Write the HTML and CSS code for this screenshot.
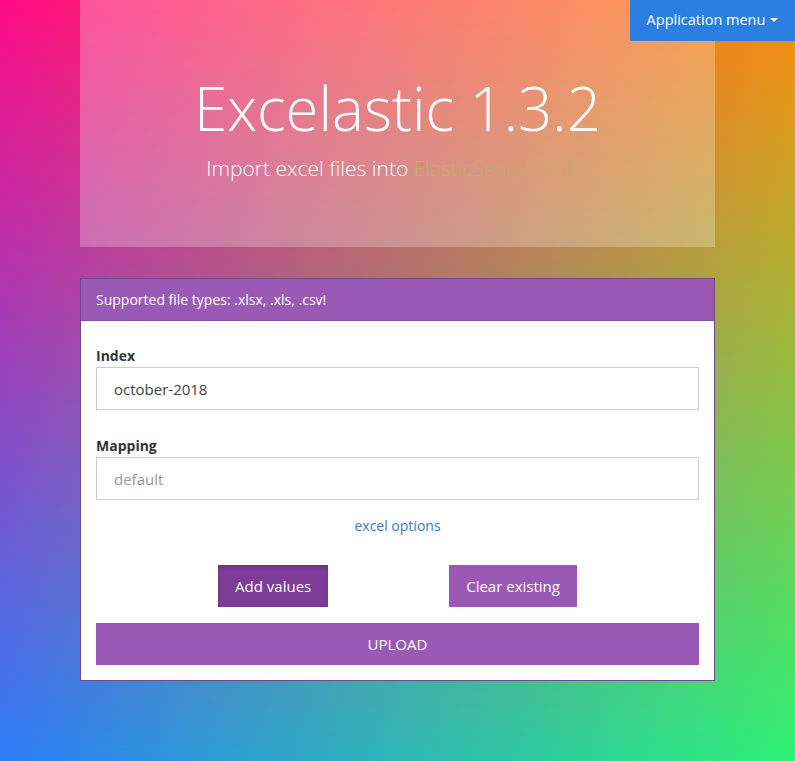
FILE: index.html
```html
<!DOCTYPE html>
<html>
<head>
<meta charset="utf-8">
<link rel="stylesheet" href="styles.css">
</head>
<body>
<div class="bg-top"></div>
<div class="app-menu">Application menu <span class="caret"></span></div>
<div class="container">
  <header class="jumbotron">
    <h1 class="title">Excelastic 1.3.2</h1>
    <p class="subtitle">Import excel files into <span class="es">ElasticSearch 6.4.2</span></p>
  </header>
  <section class="panel">
    <div class="panel-heading">Supported file types: .xlsx, .xls, .csv!</div>
    <div class="panel-body">
      <div class="form-group">
        <label class="label">Index</label>
        <input class="input" type="text" value="october-2018">
      </div>
      <div class="form-group">
        <label class="label">Mapping</label>
        <input class="input" type="text" placeholder="default">
      </div>
      <div class="options"><a class="link">excel options</a></div>
      <div class="btn-row">
        <button class="btn btn-active">Add values</button>
        <button class="btn">Clear existing</button>
      </div>
      <button class="btn btn-block">UPLOAD</button>
    </div>
  </section>
</div>
</body>
</html>
```
FILE: styles.css
```css
html, body {
  margin: 0;
  height: 100%;
}
body {
  position: relative;
  min-height: 761px;
  font-family: "Open Sans", "Noto Sans", sans-serif;
  background: linear-gradient(to right, #2d7df8, #2df276);
  overflow: hidden;
}
.bg-top {
  position: absolute;
  inset: 0;
  background: linear-gradient(to right, #ff0a84, #fb8a0c);
  -webkit-mask-image: linear-gradient(to bottom, #000, transparent);
  mask-image: linear-gradient(to bottom, #000, transparent);
  z-index: 0;
}
.app-menu {
  position: absolute;
  top: 0;
  right: 0;
  width: 165px;
  height: 41px;
  box-sizing: border-box;
  padding-bottom: 2px;
  background: #2a7fe0;
  color: #fff;
  font-size: 14.5px;
  display: flex;
  align-items: center;
  justify-content: center;
  gap: 3px;
  z-index: 2;
}
.caret {
  display: inline-block;
  width: 0;
  height: 0;
  border-left: 4px solid transparent;
  border-right: 4px solid transparent;
  border-top: 4px solid #fff;
  margin-left: 2px;
}
.container {
  position: relative;
  z-index: 1;
  width: 635px;
  margin: 0 auto;
}
.jumbotron {
  height: 247px;
  background: rgba(255, 255, 255, 0.26);
  display: flex;
  flex-direction: column;
  align-items: center;
  box-sizing: border-box;
  padding-top: 68px;
}
.title {
  margin: 0;
  font-weight: 300;
  font-size: 60px;
  line-height: 80px;
  color: #fff;
}
.subtitle {
  margin: 5px 0 0;
  font-weight: 300;
  font-size: 21px;
  line-height: 30px;
  color: #fff;
}
.es {
  color: #c2ac6c;
}
.panel {
  margin-top: 31px;
  background: #fff;
  border: 1px solid #6e4a8c;
}
.panel-heading {
  background: #9b59b6;
  color: #fff;
  font-size: 14px;
  height: 41px;
  line-height: 41px;
  padding: 0 15px;
  border-bottom: 1px solid #8a4ea6;
}
.panel-body {
  padding: 25px 15px 15px;
}
.form-group {
  margin-bottom: 26px;
}
.form-group + .form-group {
  margin-bottom: 16px;
}
.label {
  display: block;
  font-weight: 700;
  font-size: 14px;
  line-height: 20px;
  color: #333;
  margin-bottom: 1px;
}
.input {
  display: block;
  width: 100%;
  box-sizing: border-box;
  height: 43px;
  border: 1px solid #ccc;
  padding: 0 17px;
  font-family: inherit;
  font-size: 15px;
  color: #444;
  outline: none;
}
.input::placeholder {
  color: #999;
}
.options {
  text-align: center;
  line-height: 20px;
  font-size: 14px;
}
.link {
  color: #3a7cc4;
  cursor: pointer;
}
.btn-row {
  display: flex;
  justify-content: center;
  gap: 121px;
  margin-top: 29px;
}
.btn {
  font-family: inherit;
  font-size: 15px;
  color: #fff;
  background: #9b59b6;
  border: none;
  height: 42px;
  padding: 0 17px;
}
.btn-active {
  background: #7d3c98;
  box-shadow: inset 0 2px 5px rgba(0,0,0,0.15);
}
.btn-block {
  display: block;
  width: 100%;
  margin-top: 16px;
}
```
